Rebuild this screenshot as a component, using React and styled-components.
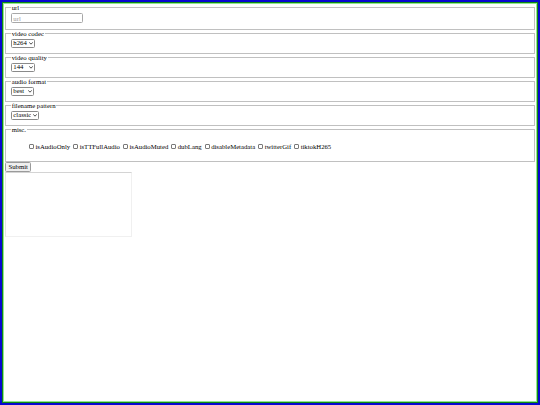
import React from "react";
import styled, { createGlobalStyle } from "styled-components";

const GlobalStyle = createGlobalStyle`
  html, body {
    margin: 0;
    padding: 0;
    background: #ffffff;
  }
  body {
    font-family: "Liberation Serif", "Times New Roman", serif;
    font-size: 6.72px;
    color: #000000;
  }
`;

const Frame = styled.div`
  box-sizing: border-box;
  height: 100vh;
  border: 2px solid #0808d0;
  box-shadow: inset 0 0 0 1px #138a13, inset 0 0 0 2px #92e692;
  padding: 2px;
  overflow: hidden;
`;

const Form = styled.form`
  margin: 0;
`;

const Group = styled.fieldset`
  margin: 0 0.84px;
  border: 1px solid #c0c0c0;
  padding: 2.35px 5px 4.2px;
  min-width: 0;
`;

const Legend = styled.legend`
  padding: 0 0.84px;
  line-height: normal;
`;

const Field = styled.input`
  display: block;
  box-sizing: border-box;
  width: 72px;
  height: 10px;
  margin: 0 0 1px;
  padding: 0 1.5px;
  font: inherit;
  border: 1px solid #a8a8a8;
  border-radius: 1.5px;
  &::placeholder {
    color: #9a9a9a;
  }
`;

const PickerWrap = styled.span`
  position: relative;
  display: inline-block;
  vertical-align: top;
`;

const Picker = styled.select`
  display: block;
  box-sizing: border-box;
  height: 9.5px;
  margin: 0;
  padding: 0 7px 0 1.5px;
  font: inherit;
  line-height: 1;
  color: #000000;
  border: 1px solid #8a8a8a;
  border-radius: 1.5px;
  background: #ffffff;
  appearance: none;
  -webkit-appearance: none;
`;

const Chevron = styled.svg`
  position: absolute;
  right: 2px;
  top: 3.3px;
  width: 4px;
  height: 3px;
  pointer-events: none;
`;

const Options = styled.ul`
  list-style: none;
  margin: 7.6px 0;
  padding-left: 16.8px;
`;

const Item = styled.li`
  display: inline;
`;

const Check = styled.input.attrs({ type: "checkbox" })`
  appearance: none;
  -webkit-appearance: none;
  box-sizing: border-box;
  width: 5px;
  height: 5px;
  margin: 0 1.3px 0 1.5px;
  vertical-align: -0.3px;
  border: 1px solid #7a7a7a;
  border-radius: 1px;
  background: #ffffff;
`;

const SubmitButton = styled.button`
  display: block;
  box-sizing: border-box;
  height: 10px;
  margin: 0 0 0 1px;
  padding: 0 2.5px;
  font: inherit;
  line-height: 1;
  color: #000000;
  background: #efefef;
  border: 1px solid #9a9a9a;
  border-radius: 1.5px;
`;

const Output = styled.div`
  box-sizing: border-box;
  width: 127px;
  height: 65px;
  margin-left: 1px;
  border: 1px solid #f0f0f0;
  border-top-color: #d4d4d4;
  border-left-color: #e4e4e4;
`;

const selects = [
  { label: "video codec", options: ["h264", "av1", "vp9"] },
  { label: "video quality", options: ["144", "240", "360", "480", "720", "1080", "max"] },
  { label: "audio format", options: ["best", "mp3", "ogg", "wav", "opus"] },
  { label: "filename pattern", options: ["classic", "basic", "pretty", "nerdy"] },
];

const flags = [
  "isAudioOnly",
  "isTTFullAudio",
  "isAudioMuted",
  "dubLang",
  "disableMetadata",
  "twitterGif",
  "tiktokH265",
];

export default function App() {
  return (
    <>
      <GlobalStyle />
      <Frame>
        <Form onSubmit={(e) => e.preventDefault()}>
          <Group>
            <Legend>url</Legend>
            <Field type="text" placeholder="url" />
          </Group>
          {selects.map((s) => (
            <Group key={s.label}>
              <Legend>{s.label}</Legend>
              <PickerWrap>
                <Picker>
                  {s.options.map((o) => (
                    <option key={o}>{o}</option>
                  ))}
                </Picker>
                <Chevron viewBox="0 0 8 6">
                  <path
                    d="M1 1.2 L4 4.4 L7 1.2"
                    fill="none"
                    stroke="#222"
                    strokeWidth="1.6"
                    strokeLinecap="round"
                    strokeLinejoin="round"
                  />
                </Chevron>
              </PickerWrap>
            </Group>
          ))}
          <Group>
            <Legend>misc.</Legend>
            <Options>
              {flags.map((f) => (
                <Item key={f}>
                  <Check id={f} />
                  <label htmlFor={f}>{f}</label>{" "}
                </Item>
              ))}
            </Options>
          </Group>
          <SubmitButton type="submit">Submit</SubmitButton>
          <Output />
        </Form>
      </Frame>
    </>
  );
}
